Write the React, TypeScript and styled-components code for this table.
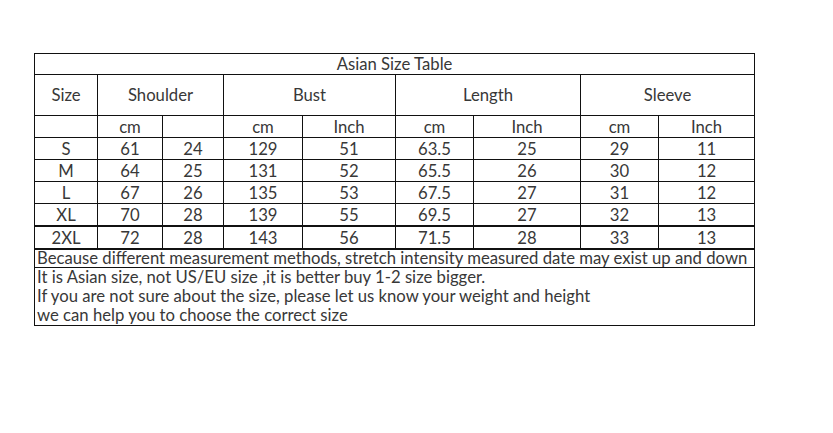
import styled, { createGlobalStyle } from "styled-components";

// ── Data ──────────────────────────────────────────────────────────────────────

const widths = [63, 65, 61, 79, 93, 78, 107, 78, 96];

const rows = [
  ["S", "61", "24", "129", "51", "63.5", "25", "29", "11"],
  ["M", "64", "25", "131", "52", "65.5", "26", "30", "12"],
  ["L", "67", "26", "135", "53", "67.5", "27", "31", "12"],
  ["XL", "70", "28", "139", "55", "69.5", "27", "32", "13"],
  ["2XL", "72", "28", "143", "56", "71.5", "28", "33", "13"],
];

const notes = [
  "It is Asian size, not US/EU size ,it is better buy 1-2 size bigger.",
  "If you are not sure about the size, please let us know your weight and height",
  "we can help you to choose the correct size",
];

// ── Styles ────────────────────────────────────────────────────────────────────

const GlobalStyle = createGlobalStyle`
  html, body { margin: 0; padding: 0; background: #fff; }
  body { font-family: Lato, "Noto Sans", sans-serif; color: #383838; }
`;

const Page = styled.div`
  width: 833px;
  height: 433px;
  padding: 53px 0 0 34px;
  box-sizing: border-box;
`;

const SizeTable = styled.table`
  border-collapse: collapse;
  table-layout: fixed;
  width: 721px;
  font-size: 16.7px;
  font-weight: 400;
  line-height: 18px;
`;

const Cell = styled.td<{ $h?: number; $thickTop?: boolean }>`
  border: 1px solid #111;
  border-top-width: ${(p) => (p.$thickTop ? "2px" : "1px")};
  height: ${(p) => (p.$h ? `${p.$h}px` : "auto")};
  padding: 0;
  text-align: center;
  vertical-align: middle;
  white-space: nowrap;
`;

const NoteCell = styled(Cell)`
  text-align: left;
  padding-left: 2px;
  line-height: 17px;
`;

const NoteLine = styled.div`
  line-height: 19px;
`;

// ── Component ─────────────────────────────────────────────────────────────────

export default function App() {
  return (
    <Page>
      <GlobalStyle />
      <SizeTable>
        <colgroup>
          {widths.map((w, i) => (
            <col key={i} style={{ width: w }} />
          ))}
        </colgroup>
        <tbody>
          <tr>
            <Cell colSpan={9} $h={20}>Asian Size Table</Cell>
          </tr>
          <tr>
            <Cell $h={40}>Size</Cell>
            <Cell colSpan={2}>Shoulder</Cell>
            <Cell colSpan={2}>Bust</Cell>
            <Cell colSpan={2}>Length</Cell>
            <Cell colSpan={2}>Sleeve</Cell>
          </tr>
          <tr>
            <Cell $h={21}></Cell>
            <Cell>cm</Cell>
            <Cell></Cell>
            <Cell>cm</Cell>
            <Cell>Inch</Cell>
            <Cell>cm</Cell>
            <Cell>Inch</Cell>
            <Cell>cm</Cell>
            <Cell>Inch</Cell>
          </tr>
          {rows.map((r, i) => (
            <tr key={r[0]}>
              {r.map((v, j) => (
                <Cell key={j} $h={21} $thickTop={i === 4}>
                  {v}
                </Cell>
              ))}
            </tr>
          ))}
          <tr>
            <NoteCell colSpan={9} $h={17} $thickTop>
              Because different measurement methods, stretch intensity measured date may exist up and down
            </NoteCell>
          </tr>
          <tr>
            <NoteCell colSpan={9} $h={56}>
              {notes.map((n) => (
                <NoteLine key={n}>{n}</NoteLine>
              ))}
            </NoteCell>
          </tr>
        </tbody>
      </SizeTable>
    </Page>
  );
}
